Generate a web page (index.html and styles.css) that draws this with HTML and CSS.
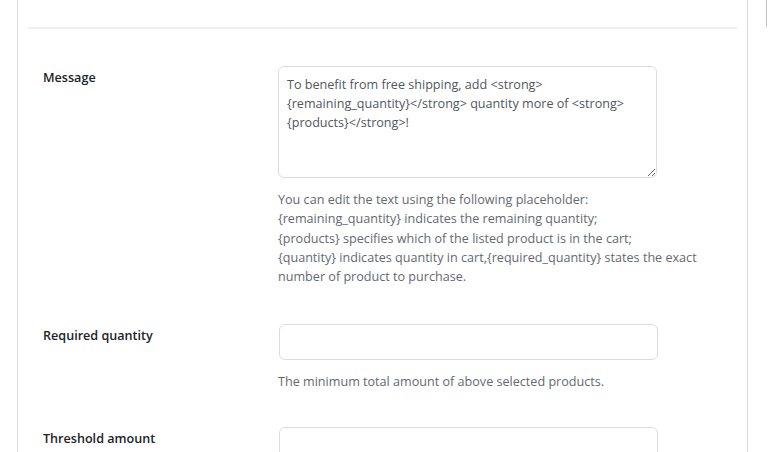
FILE: index.html
```html
<!DOCTYPE html>
<html lang="en">
  <head>
    <meta charset="UTF-8" />
    <meta name="viewport" content="width=device-width, initial-scale=1.0" />
    <title>Free shipping message</title>
    <link rel="stylesheet" href="styles.css">
  </head>
  <body>
    <div class="page">
      <div class="panel">
        <div class="panel-top"></div>
        <div class="settings">
          <div class="row row-message">
            <label class="row-label" for="message">Message</label>
            <div class="row-field">
              <textarea id="message" class="field-area">To benefit from free shipping, add <strong>{remaining_quantity}</strong> quantity more of <strong>{products}</strong>!</textarea>
              <p class="help">
                You can edit the text using the following placeholder:<br>
                {remaining_quantity} indicates the remaining quantity;<br>
                {products} specifies which of the listed product is in the cart;<br>
                {quantity} indicates quantity in cart,{required_quantity} states the exact number of product to purchase.
              </p>
            </div>
          </div>
          <div class="row">
            <label class="row-label" for="required">Required quantity</label>
            <div class="row-field">
              <input id="required" class="field-input" type="text">
              <p class="help">The minimum total amount of above selected products.</p>
            </div>
          </div>
          <div class="row">
            <label class="row-label" for="threshold">Threshold amount</label>
            <div class="row-field">
              <input id="threshold" class="field-input" type="text">
            </div>
          </div>
        </div>
      </div>
      <div class="side"></div>
    </div>
  </body>
</html>
```

FILE: styles.css
```css
body {
  margin: 0;
  background: #fff;
  font-family: "Open Sans", "Noto Sans", sans-serif;
  font-size: 12.6px;
  color: #3c434a;
}

.page {
  display: flex;
  align-items: flex-start;
  padding-left: 17px;
  height: 452px;
  overflow: hidden;
}

.panel {
  flex-shrink: 0;
  box-sizing: border-box;
  width: 731px;
  min-height: 452px;
  border-left: 1px solid #dcdcde;
  border-right: 1px solid #dcdcde;
  padding: 0 10px;
}

.panel-top {
  height: 27px;
  border-bottom: 2px solid #f0f0f1;
}

.settings {
  padding: 37px 0 0 15px;
}

.row {
  display: grid;
  grid-template-columns: 235px 440px;
  margin-bottom: 35px;
}

.row-message {
  margin-bottom: 38px;
}

.row-label {
  font-weight: 600;
  color: #1d2327;
  padding-top: 2px;
  line-height: 19px;
}

.field-area,
.field-input {
  display: block;
  box-sizing: border-box;
  width: 379px;
  margin: 0;
  border: 1px solid #dcdcde;
  border-radius: 6px;
  background: #fff;
  font-family: inherit;
  font-size: 12.6px;
  color: #50575e;
}

.field-area {
  height: 112px;
  padding: 8px;
  line-height: 19px;
  resize: vertical;
}

.field-input {
  height: 36px;
  padding: 0 8px;
  margin-left: 1px;
}

.help {
  margin: 12px 0 0;
  line-height: 19.3px;
  color: #646970;
}

.side {
  flex-shrink: 0;
  margin-left: 18px;
  width: 2px;
  height: 27px;
  border-left: 1px solid #c3c4c7;
}
```
